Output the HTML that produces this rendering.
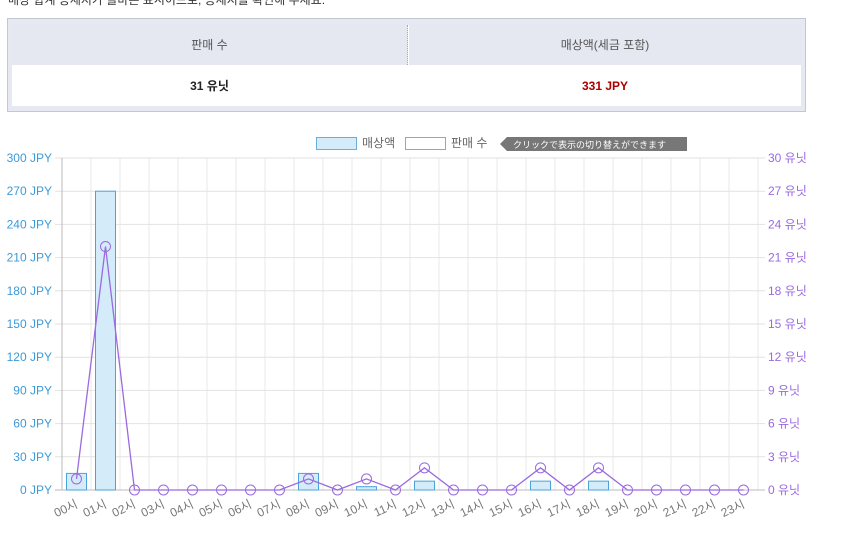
<!DOCTYPE html>
<html><head><meta charset="utf-8"><style>
body{margin:0;width:867px;height:537px;background:#fff;font-family:"Liberation Sans","Noto Sans CJK KR",sans-serif;overflow:hidden;position:relative}
.top{position:absolute;left:8px;top:-9px;font-size:12px;color:#333}
.box{position:absolute;left:7px;top:18px;width:797px;height:92px;border:1px solid #c3c7d3;background:#e6e9f1}
.in{position:absolute;left:4px;top:6px;width:789px;height:81px;background:#fff}
.h{position:absolute;top:0;height:40px;background:#e5e8f1;line-height:40px;text-align:center;font-size:12px;color:#555}
.v{position:absolute;top:41px;height:40px;line-height:40px;text-align:center;font-size:12px;font-weight:bold}
</style></head><body>
<div class="top">매상 합계 등세지가 올바른 표시이므로, 등세지를 확인해 주세요.</div>
<div class="box"><div class="in">
<div class="h" style="left:0;width:395px;border-right:1px dotted #aaa">판매 수</div>
<div class="h" style="left:397px;width:392px">매상액(세금 포함)</div>
<div class="v" style="left:0;width:395px;color:#222">31 유닛</div>
<div class="v" style="left:397px;width:392px;color:#a00">331 JPY</div>
</div></div>
<svg width="867" height="537" style="position:absolute;left:0;top:0" font-family="Liberation Sans, Noto Sans CJK KR, sans-serif">
<rect x="316.5" y="137.5" width="40" height="12" fill="#d4ebfa" stroke="#6aaedf"/>
<text x="362" y="147" font-size="12" fill="#666">매상액</text>
<rect x="405.5" y="137.5" width="40" height="12" fill="#fff" stroke="#b18ee8"/>
<text x="451" y="147" font-size="12" fill="#666">판매 수</text>
<path d="M500 144 L507 137 H687 V151 H507 Z" fill="#777"/>
<text x="513" y="148" font-size="9" fill="#fff" font-family="Noto Sans CJK JP, sans-serif">クリックで表示の切り替えができます</text>
<g id="g"></g>
</svg>
<script>
var s='',L=62,T=158,B=490,W=29;
for(var i=0;i<=24;i++){var x=L+W*i;s+='<line x1="'+x+'" y1="'+T+'" x2="'+x+'" y2="'+B+'" stroke="#e8e8e8"/>';}
for(var j=0;j<=10;j++){var y=B-(B-T)*j/10;s+='<line x1="55" y1="'+y+'" x2="765" y2="'+y+'" stroke="#e2e2e2"/>';
s+='<text x="52" y="'+(y+4)+'" font-size="12" fill="#3c9ad8" text-anchor="end">'+(j*30)+' JPY</text>';
s+='<text x="768" y="'+(y+4)+'" font-size="12" fill="#9a6ae0">'+(j*3)+' 유닛</text>';}
s+='<line x1="62" y1="'+T+'" x2="62" y2="'+B+'" stroke="#bbb"/><line x1="55" y1="'+B+'" x2="765" y2="'+B+'" stroke="#bbb"/>';
var bars={0:15,1:270,8:15,10:3,12:8,16:8,18:8};
for(var k in bars){var h=bars[k]*(B-T)/300;var x=L+W*k+4.5;s+='<rect x="'+x+'" y="'+(B-h)+'" width="20" height="'+h+'" fill="#d4ebfa" stroke="#4ba3db"/>';}
var ln={0:1,1:22,8:1,10:1,12:2,16:2,18:2},p=[],c='';
for(var i=0;i<24;i++){var v=ln[i]||0;var x=L+W*i+14.5,y=B-v*(B-T)/30;p.push(x+','+y);c+='<circle cx="'+x+'" cy="'+y+'" r="5" fill="none" stroke="#9a6ae0"/>';
s+='<text transform="translate('+(x+2)+',507) rotate(-25)" font-size="12" fill="#777" text-anchor="end">'+(i<10?'0'+i:i)+'시</text>';}
s+='<polyline points="'+p.join(' ')+'" fill="none" stroke="#9a6ae0" stroke-width="1.3"/>'+c;
document.getElementById('g').innerHTML=s;
</script>
</body></html>
